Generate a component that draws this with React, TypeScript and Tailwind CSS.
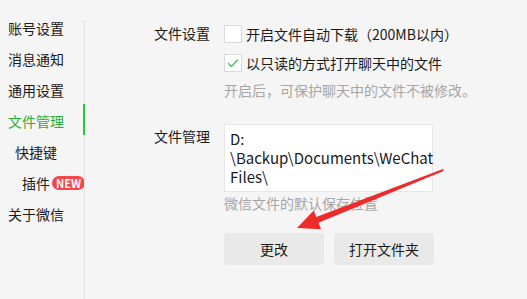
import React from "react";

const font = { fontFamily: '"Noto Sans CJK SC", "Noto Sans", sans-serif' };

function SideItem({ label, active, pl, badge }: { label: string; active?: boolean; pl: string; badge?: boolean }) {
  return (
    <div className={`h-[31px] flex items-center whitespace-nowrap text-[14px] leading-[20px] ${pl} ${active ? "text-[#2aae3c]" : "text-[#1a1a1a]"}`}>
      <span className="shrink-0">{label}</span>
      {badge && (
        <span className="shrink-0 ml-[2px] h-[14px] px-[4px] rounded-full bg-[#f5484b] text-white text-[11px] font-bold leading-[14px] flex items-center">
          NEW
        </span>
      )}
    </div>
  );
}

function Checkbox({ checked }: { checked?: boolean }) {
  return (
    <div className="w-[18px] h-[18px] bg-white border border-[#d9d9d9] flex items-center justify-center shrink-0">
      {checked && (
        <svg width="12" height="10" viewBox="0 0 12 10">
          <path d="M1 5 L4.5 8.5 L11 1.5" fill="none" stroke="#3cc15a" strokeWidth="1.3" />
        </svg>
      )}
    </div>
  );
}

export default function App() {
  return (
    <div className="relative w-[527px] h-[299px] bg-[#f5f5f5] flex overflow-hidden" style={font}>
      <div className="w-[83px] shrink-0 pt-[12px] flex flex-col">
        <SideItem label="账号设置" pl="pl-[8px]" />
        <SideItem label="消息通知" pl="pl-[8px]" />
        <SideItem label="通用设置" pl="pl-[8px]" />
        <SideItem label="文件管理" pl="pl-[8px]" active />
        <SideItem label="快捷键" pl="pl-[15px]" />
        <SideItem label="插件" pl="pl-[22px]" badge />
        <SideItem label="关于微信" pl="pl-[8px]" />
      </div>
      <div className="mt-[20px] w-[2px] shrink-0 flex flex-col items-center">
        <div className="h-[84px] w-px bg-[#e2e2e2]" />
        <div className="h-[31px] w-[2px] bg-[#2fc444]" />
        <div className="flex-1 w-px bg-[#e2e2e2]" />
      </div>
      <div className="flex-1 pl-[69px] pt-[25px] text-[14px] leading-[20px] text-[#1a1a1a]">
        <div className="flex">
          <div className="w-[70px] -mt-[2px]">文件设置</div>
          <div className="flex flex-col">
            <div className="flex items-center h-[18px] gap-[4px]">
              <Checkbox />
              <span>开启文件自动下载（200MB以内）</span>
            </div>
            <div className="flex items-center h-[18px] gap-[4px] mt-[11px]">
              <Checkbox checked />
              <span>以只读的方式打开聊天中的文件</span>
            </div>
            <div className="mt-[8px] text-[#a6a6a6]">开启后，可保护聊天中的文件不被修改。</div>
          </div>
        </div>
        <div className="flex mt-[24px]">
          <div className="w-[70px] pt-[2px]">文件管理</div>
          <div className="flex flex-col">
            <div className="w-[209px] h-[68px] bg-white border border-[#e6e6e6] pl-[5px] pt-[4px] text-[15px] leading-[19px] text-[#1a1a1a]">
              <div>D:</div>
              <div>\Backup\Documents\WeChat</div>
              <div>Files\</div>
            </div>
            <div className="mt-[1px] text-[#a6a6a6]">微信文件的默认保存位置</div>
            <div className="flex gap-[10px] mt-[20px]">
              <button className="w-[100px] h-[32px] rounded-[3px] bg-[#e9e9e9] text-[14px] text-[#1a1a1a]">更改</button>
              <button className="w-[100px] h-[32px] rounded-[3px] bg-[#e9e9e9] text-[14px] text-[#1a1a1a]">打开文件夹</button>
            </div>
          </div>
        </div>
      </div>
      <svg className="absolute left-0 top-0 pointer-events-none" width="527" height="299" viewBox="0 0 527 299">
        <polygon
          points="443,169 443.5,171 318.5,222.7 321.1,229.2 297,228 313.7,210.6 316.3,217.1"
          fill="#ee2a2a"
        />
      </svg>
    </div>
  );
}
